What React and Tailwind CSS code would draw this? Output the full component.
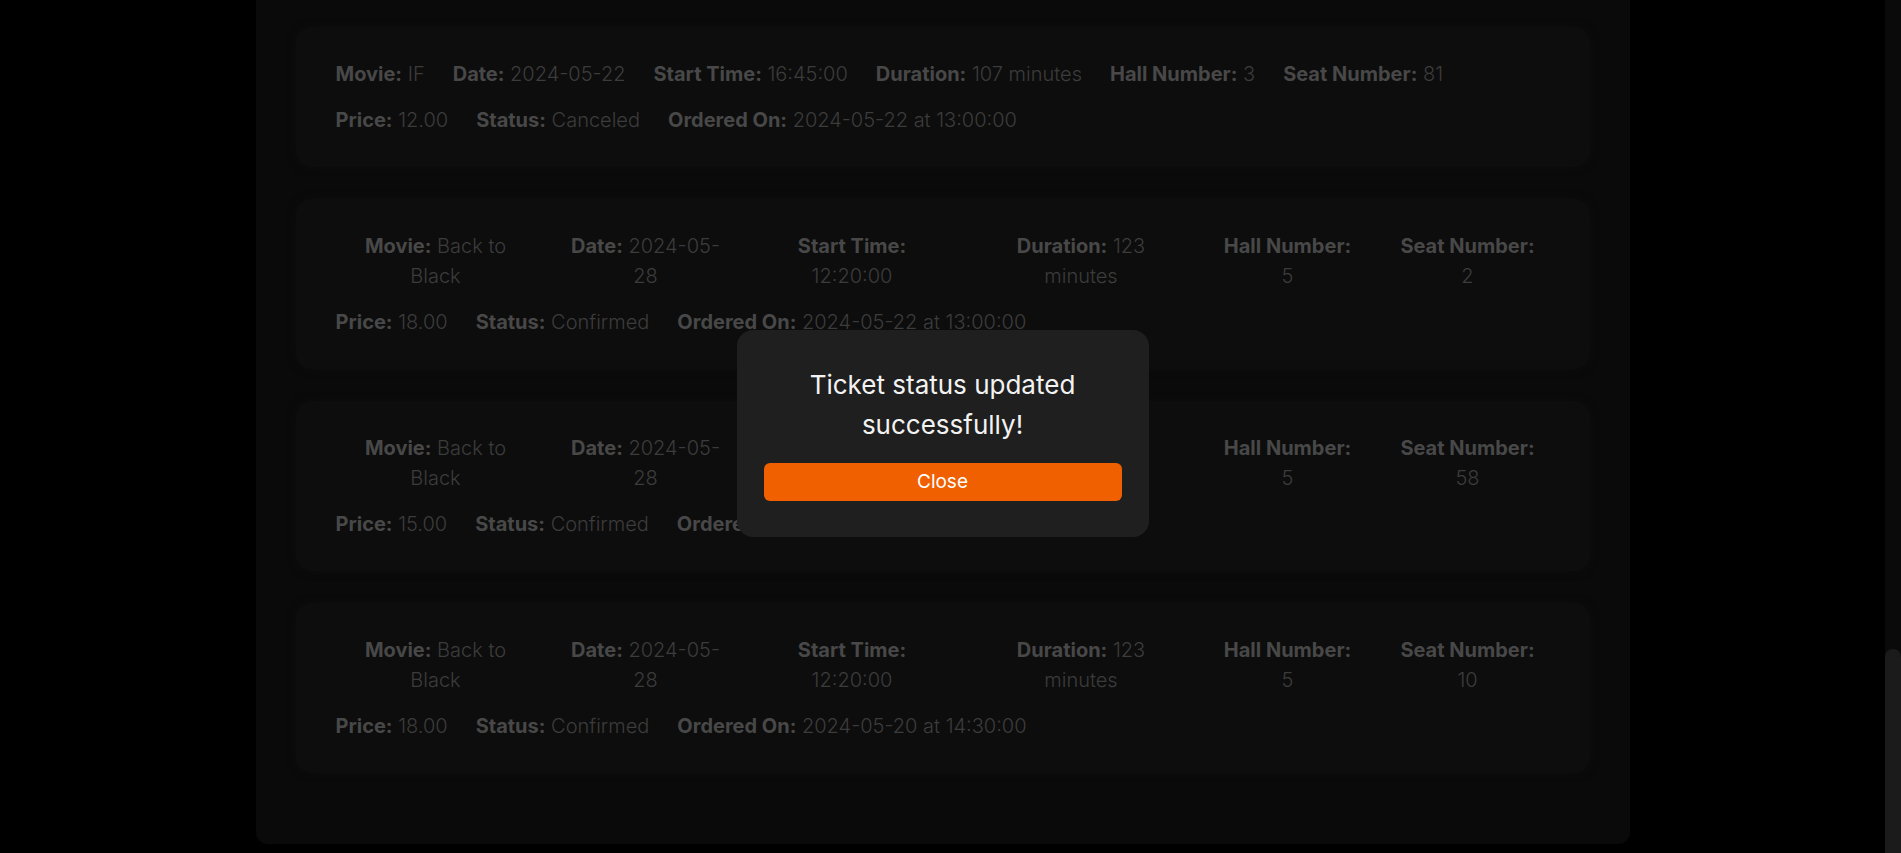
import React from "react";

const tickets = [
  {
    movie: "IF",
    date: "2024-05-22",
    start: "16:45:00",
    duration: "107 minutes",
    hall: "3",
    seat: "81",
    price: "12.00",
    status: "Canceled",
    ordered: "2024-05-22 at 13:00:00",
  },
  {
    movie: "Back to Black",
    date: "2024-05-28",
    start: "12:20:00",
    duration: "123 minutes",
    hall: "5",
    seat: "2",
    price: "18.00",
    status: "Confirmed",
    ordered: "2024-05-22 at 13:00:00",
  },
  {
    movie: "Back to Black",
    date: "2024-05-28",
    start: "12:20:00",
    duration: "123 minutes",
    hall: "5",
    seat: "58",
    price: "15.00",
    status: "Confirmed",
    ordered: "2024-05-22 at 13:00:00",
  },
  {
    movie: "Back to Black",
    date: "2024-05-28",
    start: "12:20:00",
    duration: "123 minutes",
    hall: "5",
    seat: "10",
    price: "18.00",
    status: "Confirmed",
    ordered: "2024-05-20 at 14:30:00",
  },
];

const cellWidths = [
  "w-[200px]",
  "w-[164px]",
  "w-[193px]",
  "w-[209px]",
  "w-[148px]",
  "w-[156px]",
];

// where the narrow columns wrap: [text on line 1 after label, rest]
function splitValue(label, value) {
  if (label === "Movie:") return [value.split(" ").slice(0, 2).join(" "), value.split(" ").slice(2).join(" ")];
  if (label === "Date:") return [value.slice(0, 8), value.slice(8)];
  if (label === "Duration:") return [value.split(" ")[0], value.split(" ").slice(1).join(" ")];
  return ["", value];
}

function Field({ label, value, className = "", wrap = false }) {
  if (wrap) {
    let [first, rest] = splitValue(label, value);
    return (
      <p className={`text-center shrink-0 ${className}`}>
        <span className="font-bold text-[#484848]">{label}</span>
        {first && <span className="font-light text-[#3c3c3c]"> {first}</span>}
        <br />
        <span className="font-light text-[#3c3c3c]">{rest}</span>
      </p>
    );
  }
  return (
    <p className={`text-center shrink-0 ${className}`}>
      <span className="font-bold text-[#484848]">{label}</span>{" "}
      <span className="font-light text-[#3c3c3c]">{value}</span>
    </p>
  );
}

function TicketCard({ t }) {
  let top = [
    ["Movie:", t.movie],
    ["Date:", t.date],
    ["Start Time:", t.start],
    ["Duration:", t.duration],
    ["Hall Number:", t.hall],
    ["Seat Number:", t.seat],
  ];
  let wrap = t.movie.length > 4;
  return (
    <div className="bg-[#0d0d0d] rounded-2xl pt-8 pb-8 px-10 flex flex-col gap-4 shadow-[0_0_8px_rgba(14,14,14,0.8)]">
      {/* TOP ROW */}
      <div className="flex gap-[28px]">
        {top.map(([l, v], i) => (
          <Field key={i} label={l} value={v} wrap={wrap} className={wrap ? cellWidths[i] : ""} />
        ))}
      </div>
      {/* BOTTOM ROW */}
      <div className="flex gap-[28px]">
        <Field label="Price:" value={t.price} />
        <Field label="Status:" value={t.status} />
        <Field label="Ordered On:" value={t.ordered} />
      </div>
    </div>
  );
}

export default function App() {
  return (
    <div
      className="flex h-[853px] bg-black overflow-hidden text-[20px] leading-[30px]"
      style={{ fontFamily: "Inter, 'Noto Sans', sans-serif" }}
    >
      <main className="flex-1 relative">
        <section className="mx-auto w-[1374px] bg-[#0a0a0a] rounded-b-xl pt-[27px] px-10 pb-[71px] flex flex-col gap-8">
          {tickets.map((t, idx) => (
            <TicketCard key={idx} t={t} />
          ))}
        </section>

        {/* MODAL */}
        <div className="absolute inset-0 flex justify-center items-start pt-[330px]">
          <div className="w-[412px] bg-[#1f1f1f] rounded-2xl pt-[35px] px-[27px] pb-[36px] flex flex-col items-center">
            <h2 className="text-[26px] leading-[40px] text-[#f2f2f2] text-center font-normal mb-[18px]">
              Ticket status updated
              <br />
              successfully!
            </h2>
            <button className="w-full h-[38px] rounded-md bg-[#f06000] text-white text-[19px] font-normal">
              Close
            </button>
          </div>
        </div>
      </main>

      {/* SCROLLBAR */}
      <div className="w-4 bg-[#0a0a0a] flex flex-col justify-end">
        <div className="h-[204px] rounded-t-full bg-[#1b1b1b]" />
      </div>
    </div>
  );
}
